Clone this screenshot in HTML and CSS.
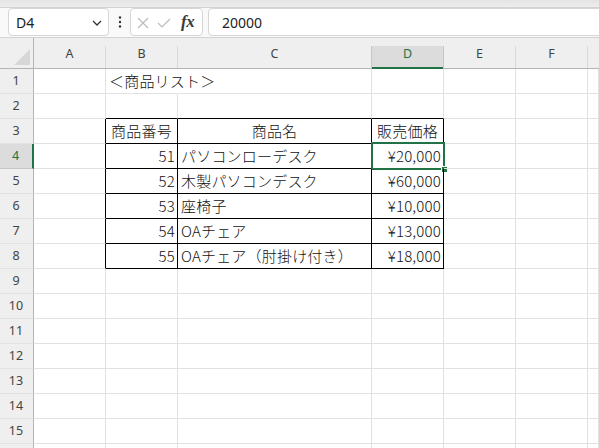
FILE: index.html
```html
<!DOCTYPE html>
<html lang="ja">
<head>
<meta charset="utf-8">
<title>Excel</title>
<link rel="stylesheet" href="styles.css">
</head>
<body>
<div class="app">
  <div class="topstrip"></div>
  <div class="toolbar">
    <div class="namebox">
      <span class="nametext">D4</span>
      <svg class="chev" width="10" height="6" viewBox="0 0 10 6"><polyline points="1,1 5,5 9,1" fill="none" stroke="#333" stroke-width="1.3"/></svg>
    </div>
    <div class="kebab">
      <svg width="4" height="12" viewBox="0 0 4 12"><circle cx="2" cy="1.5" r="1.2" fill="#333"/><circle cx="2" cy="6" r="1.2" fill="#333"/><circle cx="2" cy="10.5" r="1.2" fill="#333"/></svg>
    </div>
    <div class="fxbox">
      <svg class="xicon" width="12" height="12" viewBox="0 0 12 12"><path d="M1 1 L11 11 M11 1 L1 11" stroke="#bcbcbc" stroke-width="1.2" fill="none"/></svg>
      <svg class="chk" width="14" height="10" viewBox="0 0 14 10"><polyline points="1,5 5,9 13,1" fill="none" stroke="#bcbcbc" stroke-width="1.2"/></svg>
      <span class="fx">fx</span>
    </div>
    <div class="formula">20000</div>
  </div>

  <div class="sheet">
    <div class="hrow">
      <div class="corner"><svg width="16" height="16" viewBox="0 0 16 16"><polygon points="16,0 16,16 0,16" fill="#d7d7d7"/></svg></div>
      <div class="ch">A</div>
      <div class="ch">B</div>
      <div class="ch">C</div>
      <div class="ch sel">D</div>
      <div class="ch">E</div>
      <div class="ch">F</div>
      <div class="ch last"></div>
    </div>

    <div class="row">
      <div class="rh">1</div>
      <div class="c"></div>
      <div class="c nob">＜商品リスト＞</div>
      <div class="c"></div>
      <div class="c"></div>
      <div class="c"></div>
      <div class="c"></div>
      <div class="c"></div>
    </div>
    <div class="row">
      <div class="rh">2</div>
      <div class="c"></div>
      <div class="c tt"></div>
      <div class="c tt"></div>
      <div class="c tt"></div>
      <div class="c"></div>
      <div class="c"></div>
      <div class="c"></div>
    </div>
    <div class="row">
      <div class="rh">3</div>
      <div class="c tl"></div>
      <div class="c tb ctr">商品番号</div>
      <div class="c tb ctr">商品名</div>
      <div class="c tb ctr">販売価格</div>
      <div class="c"></div>
      <div class="c"></div>
      <div class="c"></div>
    </div>
    <div class="row">
      <div class="rh rsel">4</div>
      <div class="c tl"></div>
      <div class="c tb r">51</div>
      <div class="c tb">パソコンローデスク</div>
      <div class="c tb r active">¥20,000<span class="selbox"><span class="handle"></span></span></div>
      <div class="c"></div>
      <div class="c"></div>
      <div class="c"></div>
    </div>
    <div class="row">
      <div class="rh">5</div>
      <div class="c tl"></div>
      <div class="c tb r">52</div>
      <div class="c tb">木製パソコンデスク</div>
      <div class="c tb r">¥60,000</div>
      <div class="c"></div>
      <div class="c"></div>
      <div class="c"></div>
    </div>
    <div class="row">
      <div class="rh">6</div>
      <div class="c tl"></div>
      <div class="c tb r">53</div>
      <div class="c tb">座椅子</div>
      <div class="c tb r">¥10,000</div>
      <div class="c"></div>
      <div class="c"></div>
      <div class="c"></div>
    </div>
    <div class="row">
      <div class="rh">7</div>
      <div class="c tl"></div>
      <div class="c tb r">54</div>
      <div class="c tb">OAチェア</div>
      <div class="c tb r">¥13,000</div>
      <div class="c"></div>
      <div class="c"></div>
      <div class="c"></div>
    </div>
    <div class="row">
      <div class="rh">8</div>
      <div class="c tl"></div>
      <div class="c tb r">55</div>
      <div class="c tb">OAチェア（肘掛け付き）</div>
      <div class="c tb r">¥18,000</div>
      <div class="c"></div>
      <div class="c"></div>
      <div class="c"></div>
    </div>
    <div class="row"><div class="rh">9</div><div class="c"></div><div class="c"></div><div class="c"></div><div class="c"></div><div class="c"></div><div class="c"></div><div class="c"></div></div>
    <div class="row"><div class="rh">10</div><div class="c"></div><div class="c"></div><div class="c"></div><div class="c"></div><div class="c"></div><div class="c"></div><div class="c"></div></div>
    <div class="row"><div class="rh">11</div><div class="c"></div><div class="c"></div><div class="c"></div><div class="c"></div><div class="c"></div><div class="c"></div><div class="c"></div></div>
    <div class="row"><div class="rh">12</div><div class="c"></div><div class="c"></div><div class="c"></div><div class="c"></div><div class="c"></div><div class="c"></div><div class="c"></div></div>
    <div class="row"><div class="rh">13</div><div class="c"></div><div class="c"></div><div class="c"></div><div class="c"></div><div class="c"></div><div class="c"></div><div class="c"></div></div>
    <div class="row"><div class="rh">14</div><div class="c"></div><div class="c"></div><div class="c"></div><div class="c"></div><div class="c"></div><div class="c"></div><div class="c"></div></div>
    <div class="row"><div class="rh">15</div><div class="c"></div><div class="c"></div><div class="c"></div><div class="c"></div><div class="c"></div><div class="c"></div><div class="c"></div></div>
    <div class="row"><div class="rh"></div><div class="c"></div><div class="c"></div><div class="c"></div><div class="c"></div><div class="c"></div><div class="c"></div><div class="c"></div></div>
  </div>
</div>
</body>
</html>
```

FILE: styles.css
```css
* { box-sizing: border-box; }
html, body { margin: 0; padding: 0; background: #ffffff; }
body { width: 599px; height: 448px; overflow: hidden; }

.app {
  width: 599px;
  height: 448px;
  overflow: hidden;
  font-family: "Noto Sans", "Open Sans", sans-serif;
}

.topstrip {
  height: 8px;
  background: linear-gradient(#e4e4e4, #ededed);
  border-bottom: 1px solid #d2d2d2;
}

.toolbar {
  height: 30px;
  background: #f9f9f9;
  border-bottom: 1px solid #d2d2d2;
  display: flex;
  align-items: flex-start;
  padding-left: 8px;
}

.namebox {
  width: 101px;
  height: 28px;
  background: #ffffff;
  border: 1px solid #d6d6d6;
  border-radius: 4px;
  display: flex;
  align-items: center;
  justify-content: space-between;
  padding: 0 6px 0 7px;
}

.nametext {
  font-size: 14px;
  color: #222;
}

.chev { margin-top: 1px; }

.kebab {
  width: 21px;
  height: 28px;
  display: flex;
  align-items: center;
  justify-content: center;
}

.fxbox {
  width: 73px;
  height: 28px;
  background: #ffffff;
  border: 1px solid #d6d6d6;
  border-radius: 4px;
  display: flex;
  align-items: center;
  padding-left: 6px;
}

.xicon { margin-right: 8px; margin-top: 1px; }
.chk { margin-right: 10px; margin-top: 1px; }

.fx {
  font-family: "Liberation Serif", "DejaVu Serif", serif;
  font-style: italic;
  font-weight: bold;
  font-size: 17px;
  color: #3a3a3a;
  letter-spacing: -0.5px;
}

.formula {
  flex: 1;
  margin-left: 5px;
  margin-right: -10px;
  height: 28px;
  background: #ffffff;
  border: 1px solid #d6d6d6;
  border-radius: 4px;
  display: flex;
  align-items: center;
  padding-left: 13px;
  font-size: 14px;
  color: #222;
}

/* sheet */
.sheet {
  background: #ffffff;
}

.hrow, .row {
  display: grid;
  grid-template-columns: 34px 72px 72px 194px 72px 72px 72px 11px;
}

.hrow {
  height: 31px;
  background: #efefef;
  border-bottom: 1px solid #b4b4b4;
  align-items: end;
}

.corner {
  height: 30px;
  display: flex;
  align-items: flex-end;
  justify-content: flex-end;
  padding: 0 3px 3px 0;
  border-right: 1px solid #b4b4b4;
  align-self: stretch;
}

.ch {
  height: 22px;
  border-right: 1px solid #d9d9d9;
  display: flex;
  align-items: center;
  justify-content: center;
  padding-bottom: 8px;
  font-size: 12.5px;
  color: #444;
}

.ch.last { border-right: none; }

.ch.sel {
  background: #dcdcdc;
  color: #217346;
  border-left: 1px solid #c6c6c6;
  border-right: 1px solid #c6c6c6;
  box-shadow: inset 0 -2px 0 #217346;
  height: 23px;
  margin-bottom: -1px;
  margin-left: -1px;
  padding-bottom: 9px;
}

.row { height: 25px; }

.rh {
  background: #efefef;
  border-right: 1px solid #b4b4b4;
  border-bottom: 1px solid #e2e2e2;
  display: flex;
  align-items: center;
  justify-content: center;
  font-size: 12.5px;
  color: #444;
  padding-right: 1px;
  padding-bottom: 1px;
}

.rh.rsel {
  background: #dcdcdc;
  color: #217346;
  border-right: 2px solid #217346;
  border-bottom-color: #c6c6c6;
}

.c {
  border-right: 1px solid #e1e1e1;
  border-bottom: 1px solid #e1e1e1;
  display: flex;
  align-items: center;
  padding: 0 3px 2px 3px;
  white-space: nowrap;
  font-family: "Noto Sans CJK JP", sans-serif;
  font-weight: 300;
  font-size: 15px;
  letter-spacing: 0.2px;
  color: #111;
  position: relative;
}

.c.nob { border-right-color: transparent; }
.c.r { justify-content: flex-end; padding-right: 2px; }
.c.ctr { justify-content: center; }
.c.tb { border-right-color: #000; border-bottom-color: #000; }
.c.tt { border-bottom-color: #000; }
.c.tl { border-right-color: #000; }

.selbox {
  position: absolute;
  top: -2px;
  left: -1px;
  right: -2px;
  bottom: -2px;
  border: 2px solid #217346;
}

.handle {
  position: absolute;
  right: -5px;
  bottom: -5px;
  width: 7px;
  height: 7px;
  background: #217346;
  border: 1px solid #ffffff;
}
```
